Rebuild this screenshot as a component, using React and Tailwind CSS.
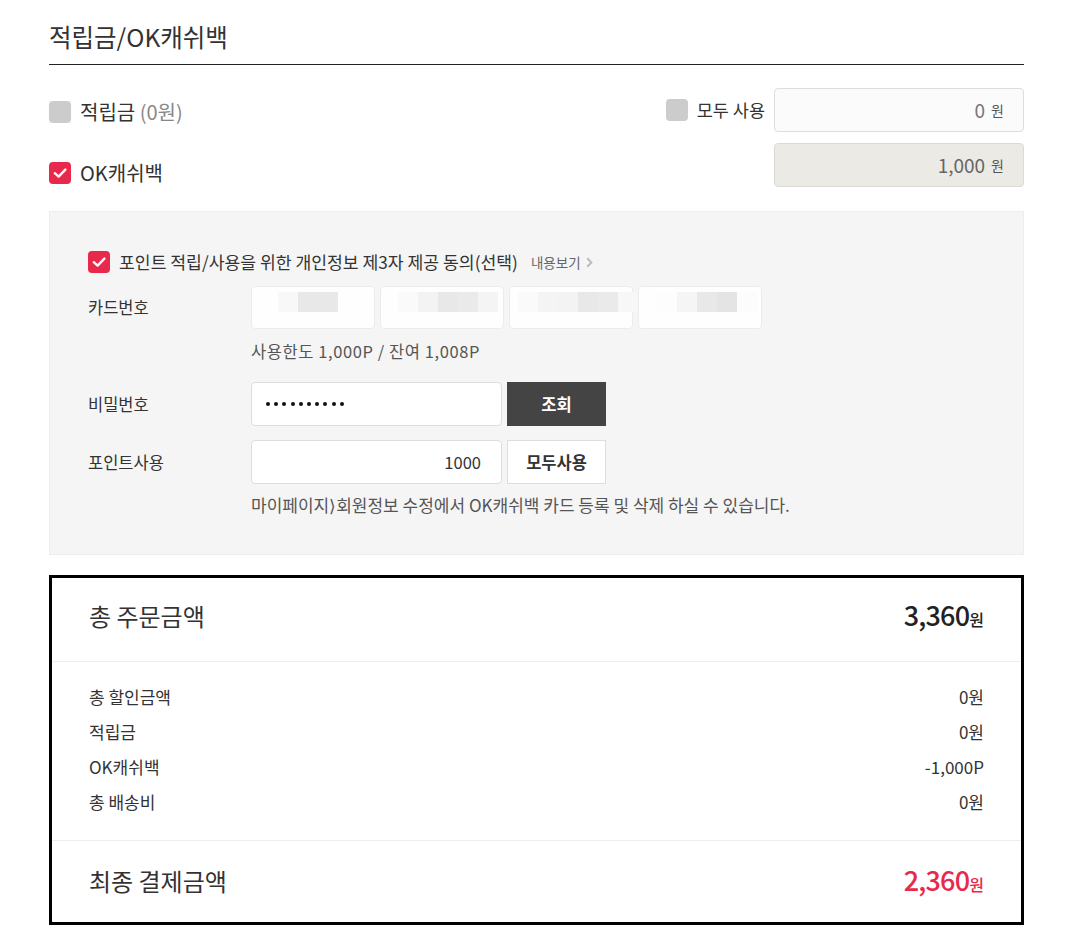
import React from "react";

const FONT = { fontFamily: '"Noto Sans CJK KR", "Noto Sans", sans-serif' };

function Check({ checked }) {
  if (checked) {
    return (
      <span className="flex h-[22px] w-[22px] shrink-0 items-center justify-center rounded-[4px] bg-[#e8294b]">
        <svg width="22" height="22" viewBox="0 0 22 22" fill="none">
          <path d="M5.8 11.2 L9.6 14.6 L16.4 7.6" stroke="white" strokeWidth="2.4" strokeLinecap="round" strokeLinejoin="round" />
        </svg>
      </span>
    );
  }
  return <span className="block h-[22px] w-[22px] shrink-0 rounded-[4px] bg-[#cccccc]" />;
}

function Mosaic({ cells }) {
  return (
    <div className="flex">
      {cells.map((c, i) => (
        <span key={i} className="block h-[20px] w-[20px]" style={{ backgroundColor: c }} />
      ))}
    </div>
  );
}

function CardBox({ cells, pl }) {
  return (
    <div className="flex h-[43px] w-[124px] items-start rounded-[4px] border border-[#ececec] bg-[#fefefe] pt-[5px]" style={{ paddingLeft: pl }}>
      <Mosaic cells={cells} />
    </div>
  );
}

export default function App() {
  return (
    <div className="min-h-[945px] bg-white text-[#333]" style={FONT}>
      <div className="w-[975px] ml-[49px]">
        {/* Title */}
        <div className="border-b border-[#222] pt-[21px] pb-[11px]">
          <h2 className="text-[24.5px] leading-[32px] text-[#333]">적립금/OK캐쉬백</h2>
        </div>

        {/* Top rows */}
        <div className="flex justify-between">
          <div className="pt-[36px]">
            <div className="flex h-[22px] items-center gap-[9px]">
              <Check checked={false} />
              <span className="text-[20px] leading-[22px]">
                적립금 <span className="text-[#888]">(0원)</span>
              </span>
            </div>
            <div className="mt-[39px] flex h-[22px] items-center gap-[9px]">
              <Check checked={true} />
              <span className="text-[20px] leading-[22px]">OK캐쉬백</span>
            </div>
          </div>
          <div className="pt-[23px]">
            <div className="flex items-center">
              <Check checked={false} />
              <span className="ml-[9px] mr-[9px] text-[17.5px] leading-[22px]">모두 사용</span>
              <div className="flex h-[44px] w-[250px] items-center justify-end rounded-[4px] border border-[#dddddd] bg-[#fbfbfb] pr-[19px]">
                <span className="text-[19px] text-[#777]">0</span>
                <span className="ml-[6px] text-[14px] text-[#555]">원</span>
              </div>
            </div>
            <div className="mt-[11px] flex justify-end">
              <div className="flex h-[44px] w-[250px] items-center justify-end rounded-[4px] border border-[#dcdbd3] bg-[#ebeae4] pr-[19px]">
                <span className="text-[19px] text-[#666]">1,000</span>
                <span className="ml-[6px] text-[14px] text-[#555]">원</span>
              </div>
            </div>
          </div>
        </div>

        {/* Gray box */}
        <div className="mt-[24px] border border-[#eeeeee] bg-[#f5f5f5] pl-[38px] pt-[39px] pb-[38px]">
          <div className="flex h-[22px] items-center">
            <Check checked={true} />
            <span className="ml-[9px] text-[17.2px] leading-[22px] text-[#333]">
              포인트 적립/사용을 위한 개인정보 제3자 제공 동의(선택)
            </span>
            <span className="ml-[13px] flex items-center text-[13.5px] leading-[22px] text-[#666]">
              내용보기
              <svg className="ml-[5px]" width="7" height="11" viewBox="0 0 7 11" fill="none">
                <path d="M1.2 1.2 L5.4 5.5 L1.2 9.8" stroke="#bbbbbb" strokeWidth="2" />
              </svg>
            </span>
          </div>

          <div className="mt-[13px] flex items-center">
            <span className="w-[163px] text-[16.5px]">카드번호</span>
            <div className="flex gap-[5px]">
              <CardBox pl={26} cells={["#f8f8f8", "#e8e8e8", "#e8e8e8"]} />
              <CardBox pl={17} cells={["#fafafa", "#f3f3f3", "#e8e8e8", "#eaeaea", "#f4f4f4"]} />
              <CardBox pl={8} cells={["#fafafa", "#f4f4f4", "#f3f3f3", "#e8e8e8", "#eaeaea", "#f7f7f7"]} />
              <CardBox pl={18} cells={["#fdfdfd", "#f5f5f5", "#e8e8e8", "#e4e4e4", "#fcfcfc"]} />
            </div>
          </div>

          <div className="mt-[11px] pl-[163px] text-[16.5px] leading-[22px] tracking-[0.035em] text-[#555]">
            사용한도 1,000P / 잔여 1,008P
          </div>

          <div className="mt-[20px] flex items-center">
            <span className="w-[163px] text-[16.5px]">비밀번호</span>
            <div className="flex h-[44px] w-[251px] items-center gap-[4.2px] rounded-[4px] border border-[#dddddd] bg-white pl-[14px]">
              {Array.from({ length: 10 }).map((_, i) => (
                <span key={i} className="block h-[4px] w-[4px] rounded-full bg-[#111]" />
              ))}
            </div>
            <button className="ml-[5px] h-[44px] w-[99px] bg-[#444444] text-[16.5px] font-bold text-white">조회</button>
          </div>

          <div className="mt-[14px] flex items-center">
            <span className="w-[163px] text-[16.5px]">포인트사용</span>
            <div className="flex h-[44px] w-[251px] items-center justify-end rounded-[4px] border border-[#dddddd] bg-white pr-[20px] text-[16.5px] text-[#333]">
              1000
            </div>
            <button className="ml-[5px] h-[44px] w-[99px] border border-[#dddddd] bg-white text-[16.5px] font-bold text-[#333]">모두사용</button>
          </div>

          <div className="mt-[10px] pl-[163px] text-[17px] leading-[22px] text-[#555]">
            마이페이지⟩회원정보 수정에서 OK캐쉬백 카드 등록 및 삭제 하실 수 있습니다.
          </div>
        </div>

        {/* Summary */}
        <div className="mt-[20px] border-[3px] border-black bg-white">
          <div className="flex h-[83px] items-center justify-between px-[37px] pb-[8px]">
            <span className="text-[24px] text-[#333]">총 주문금액</span>
            <span className="flex items-baseline text-[#222]">
              <span className="text-[27px] font-medium tracking-[-0.03em]">3,360</span>
              <span className="text-[16px] font-medium">원</span>
            </span>
          </div>
          <div className="border-t border-[#eeeeee] px-[37px] pt-[17px] pb-[21px]">
            {[
              ["총 할인금액", "0원"],
              ["적립금", "0원"],
              ["OK캐쉬백", "-1,000P"],
              ["총 배송비", "0원"],
            ].map(([k, v]) => (
              <div key={k} className="flex h-[35px] items-center justify-between text-[17px] text-[#333]">
                <span>{k}</span>
                <span>{v}</span>
              </div>
            ))}
          </div>
          <div className="flex h-[82px] items-center justify-between border-t border-[#eeeeee] px-[37px] pb-[2px]">
            <span className="text-[24px] text-[#333]">최종 결제금액</span>
            <span className="flex items-baseline text-[#e8294b]">
              <span className="text-[27px] font-medium tracking-[-0.03em]">2,360</span>
              <span className="text-[16px] font-medium">원</span>
            </span>
          </div>
        </div>
      </div>
    </div>
  );
}
